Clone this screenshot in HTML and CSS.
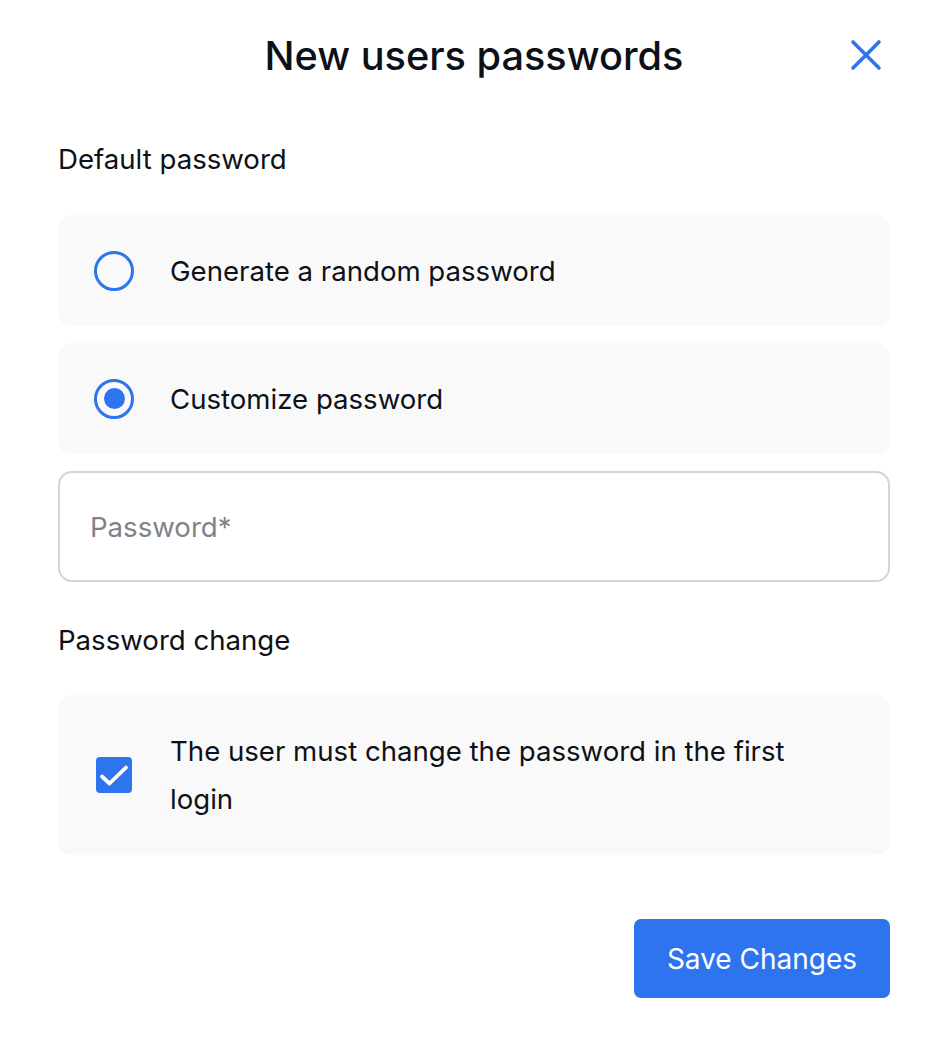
FILE: index.html
```html
<!DOCTYPE html>
<html lang="en">
<head>
<meta charset="utf-8">
<title>New users passwords</title>
<link rel="stylesheet" href="styles.css">
</head>
<body>
<div class="dialog">
  <div class="header">
    <h1 class="title">New users passwords</h1>
    <button class="close" aria-label="Close">
      <svg width="32" height="32" viewBox="0 0 32 32"><path d="M3 3 L29 29 M29 3 L3 29" stroke="#2f74ef" stroke-width="3.6" stroke-linecap="round" fill="none"/></svg>
    </button>
  </div>

  <div class="section-label">Default password</div>
  <div class="options">
    <label class="card option">
      <span class="radio"></span>
      <span class="option-text">Generate a random password</span>
    </label>
    <label class="card option">
      <span class="radio checked"></span>
      <span class="option-text">Customize password</span>
    </label>
    <div class="input">Password*</div>
  </div>

  <div class="section-label second">Password change</div>
  <label class="card check-card">
    <span class="checkbox">
      <svg width="36" height="36" viewBox="0 0 36 36"><path d="M6 19.5 L13.5 26.5 L30 10.5" stroke="#fff" stroke-width="3.8" fill="none" stroke-linecap="round" stroke-linejoin="round"/></svg>
    </span>
    <span class="option-text multi">The user must change the password in the first login</span>
  </label>

  <div class="footer">
    <button class="save">Save Changes</button>
  </div>
</div>
</body>
</html>
```

FILE: styles.css
```css
* { box-sizing: border-box; }
body {
  margin: 0;
  background: #ffffff;
  font-family: Inter, "Noto Sans", "Liberation Sans", sans-serif;
  color: #0d1117;
}
.dialog {
  padding: 32px 46px 0 58px;
}
.header {
  position: relative;
  display: flex;
  justify-content: center;
  align-items: center;
  height: 48px;
}
.title {
  margin: 0;
  font-size: 39.7px;
  font-weight: 500;
  line-height: 48px;
  letter-spacing: 0;
}
.close {
  position: absolute;
  right: 8px;
  top: 7px;
  width: 32px;
  height: 32px;
  padding: 0;
  border: 0;
  background: none;
  display: flex;
}
.section-label {
  margin-top: 62px;
  font-size: 27.6px;
  line-height: 34px;
  font-weight: 400;
}
.section-label.second { margin-top: 41px; }
.options {
  margin-top: 39px;
  display: flex;
  flex-direction: column;
  gap: 17px;
}
.card {
  background: #f9f9f9;
  border-radius: 14px;
  display: flex;
  align-items: center;
}
.option {
  height: 111px;
  padding-left: 36px;
}
.radio {
  width: 40px;
  height: 40px;
  border: 3.5px solid #2f74ef;
  border-radius: 50%;
  flex: none;
  display: flex;
  align-items: center;
  justify-content: center;
}
.radio.checked::after {
  content: "";
  width: 21px;
  height: 21px;
  border-radius: 50%;
  background: #2f74ef;
}
.option-text {
  margin-left: 36px;
  font-size: 27.6px;
  line-height: 48px;
}
.input {
  height: 111px;
  border: 2px solid #d4d4d4;
  border-radius: 14px;
  padding-left: 30px;
  display: flex;
  align-items: center;
  font-size: 27.6px;
  color: #7d8389;
}
.check-card {
  margin-top: 38px;
  height: 160px;
  padding: 32px 40px 32px 38px;
}
.checkbox {
  width: 36px;
  height: 36px;
  border-radius: 4px;
  background: #2f74ef;
  flex: none;
  display: flex;
}
.option-text.multi {
  margin-left: 38px;
  max-width: 640px;
}
.footer {
  margin-top: 64px;
  display: flex;
  justify-content: flex-end;
}
.save {
  width: 256px;
  height: 79px;
  border: 0;
  border-radius: 7px;
  background: #2f74ef;
  color: #ffffff;
  font-family: inherit;
  font-size: 28px;
  font-weight: 400;
}
```
